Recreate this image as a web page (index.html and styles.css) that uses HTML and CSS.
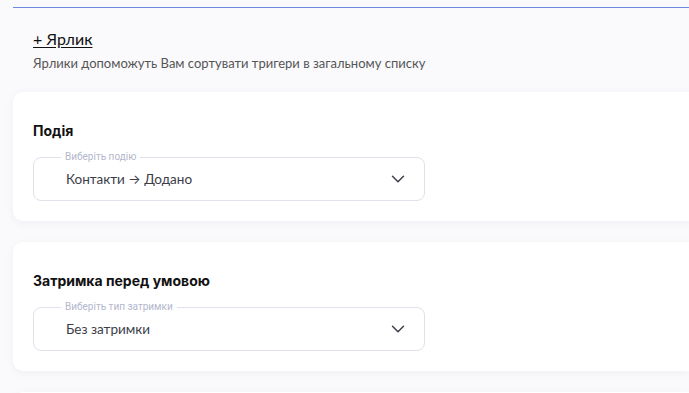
FILE: index.html
```html
<!DOCTYPE html>
<html>
<head>
  <meta charset="UTF-8">
  <title>Тригер</title>
  <meta name="viewport" content="width=device-width, initial-scale=1.0">
  <link rel="stylesheet" href="styles.css">
</head>
<body>
  <div class="page">
    <div class="divider"></div>

    <!-- Labels -->
    <div class="labels">
      <a href="#" class="add-label">+ Ярлик</a>
      <p class="hint">Ярлики допоможуть Вам сортувати тригери в загальному списку</p>
    </div>

    <!-- Event card -->
    <section class="card">
      <h3>Подія</h3>
      <div class="select">
        <span class="select-label">Виберіть подію</span>
        <span class="select-value">Контакти <span class="arrow">→</span> Додано</span>
        <svg class="chevron" width="14" height="8" viewBox="0 0 14 8"><path d="M1.5 1.2l5.5 5.5 5.5-5.5" fill="none" stroke="#3c3f4a" stroke-width="1.5" stroke-linecap="round" stroke-linejoin="round"/></svg>
      </div>
    </section>

    <!-- Delay card -->
    <section class="card">
      <h3>Затримка перед умовою</h3>
      <div class="select">
        <span class="select-label">Виберіть тип затримки</span>
        <span class="select-value">Без затримки</span>
        <svg class="chevron" width="14" height="8" viewBox="0 0 14 8"><path d="M1.5 1.2l5.5 5.5 5.5-5.5" fill="none" stroke="#3c3f4a" stroke-width="1.5" stroke-linecap="round" stroke-linejoin="round"/></svg>
      </div>
    </section>

    <section class="card card-next"></section>
  </div>
</body>
</html>
```

FILE: styles.css
```css
/* Global Styles */
body {
  font-family: Inter, "Noto Sans", sans-serif;
  margin: 0;
  padding: 0;
  background-color: #fafafc;
  color: #222;
}
.page {
  height: 100vh;
  overflow: hidden;
  padding: 7px 0 0 13px;
  box-sizing: border-box;
}
.divider {
  height: 1px;
  background-color: #6f88e0;
}
/* Labels */
.labels {
  padding: 21px 0 0 20px;
}
.add-label {
  font-family: Lato, sans-serif;
  font-size: 16px;
  line-height: 20px;
  color: #111;
  text-decoration: underline;
  text-underline-offset: 2px;
}
.hint {
  font-family: Lato, sans-serif;
  font-size: 13px;
  line-height: 16px;
  color: #555;
  margin: 6px 0 0;
}
/* Cards */
.card {
  background: #fff;
  border-radius: 10px 0 0 10px;
  box-shadow: 0 2px 10px rgba(20, 30, 70, 0.05);
  padding: 29px 20px 20px;
  margin-top: 21px;
}
.card h3 {
  font-size: 14px;
  line-height: 20px;
  font-weight: 700;
  color: #111;
  margin: 0 0 16px;
}
.select {
  position: relative;
  display: flex;
  align-items: center;
  width: 392px;
  height: 44px;
  box-sizing: border-box;
  border: 1px solid #e1e1ec;
  border-radius: 8px;
  padding: 0 19px 0 32px;
}
.select-label {
  position: absolute;
  top: -7px;
  left: 27px;
  padding: 0 4px;
  background: #fff;
  font-family: Roboto, sans-serif;
  font-size: 10px;
  line-height: 12px;
  color: #b3b7cc;
}
.select-value {
  flex: 1;
  font-family: Lato, sans-serif;
  font-size: 13.5px;
  color: #3b3d48;
}
.arrow {
  font-family: Inter, sans-serif;
  font-size: 13px;
}
.chevron {
  display: block;
}
.card-next {
  height: 40px;
}
```
